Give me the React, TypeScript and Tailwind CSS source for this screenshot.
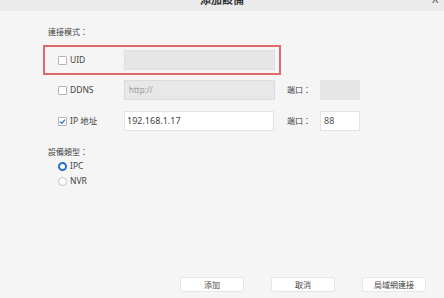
import React from "react";

const font = { fontFamily: '"Noto Sans", "Noto Sans CJK TC", sans-serif' };

function Check({ checked }: { checked?: boolean }) {
  return (
    <div className="w-[9px] h-[9px] border border-[#b5b5b5] bg-white rounded-[1px] flex items-center justify-center shrink-0">
      {checked && (
        <svg width="7" height="7" viewBox="0 0 7 7">
          <path d="M1 3.6 L2.8 5.3 L6 1.6" stroke="#2f74c9" strokeWidth="1.3" fill="none" />
        </svg>
      )}
    </div>
  );
}

function Radio({ checked }: { checked?: boolean }) {
  return checked ? (
    <div className="w-[9px] h-[9px] rounded-full border-[2.5px] border-[#1f6fcf] bg-white shrink-0" />
  ) : (
    <div className="w-[9px] h-[9px] rounded-full border border-[#c4c4c4] bg-white shrink-0" />
  );
}

function Label({ checked, text }: { checked?: boolean; text: string }) {
  return (
    <div className="w-[66px] flex items-center gap-[3px] shrink-0">
      <Check checked={checked} />
      <span className="text-[8.5px] leading-none text-[#444]">{text}</span>
    </div>
  );
}

function Btn({ text }: { text: string }) {
  return (
    <div className="w-[64px] h-[15px] bg-white border border-[#e6e6e6] rounded-[2px] flex items-center justify-center text-[8px] leading-none text-[#444]">
      {text}
    </div>
  );
}

export default function App() {
  return (
    <div className="w-[444px] h-[298px] bg-[#f5f5f5] overflow-hidden flex flex-col" style={font}>
      <div className="h-[26px] -mt-[15px] bg-[#ebebeb] shrink-0 relative flex justify-center">
        <span className="pt-[9px] text-[11px] leading-[11px] font-bold text-[#333]">添加設備</span>
        <span className="absolute right-[6px] top-[9px] text-[10px] leading-[11px] text-[#444]">X</span>
      </div>

      <div className="pl-[48px] mt-[16px] text-[8px] leading-[10px] text-[#444]">連接模式：</div>

      <div className="ml-[43px] mt-[8px] w-[238px] h-[30px] border-2 border-[#e06a6a] flex items-center pl-[13px]">
        <Label text="UID" />
        <div className="w-[151px] h-[20px] bg-[#e6e6e6] border border-[#e0e0e0] -mt-[1px]" />
      </div>

      <div className="mt-[5px] h-[20px] flex items-center pl-[58px]">
        <Label text="DDNS" />
        <div className="w-[151px] h-[20px] bg-[#e8e8e8] border border-[#dcdcdc] flex items-center pl-[4px] text-[8px] text-[#9a9a9a]">
          http://
        </div>
        <span className="ml-[12px] w-[33px] text-[8px] text-[#444]">端口：</span>
        <div className="w-[40px] h-[20px] bg-[#e6e6e6]" />
      </div>

      <div className="mt-[11px] h-[20px] flex items-center pl-[58px]">
        <Label checked text="IP 地址" />
        <div className="w-[150px] h-[20px] bg-white border border-[#e3e3e3] flex items-center pl-[2px] text-[9px] text-[#444]">
          192.168.1.17
        </div>
        <span className="ml-[13px] w-[33px] text-[8px] text-[#444]">端口：</span>
        <div className="w-[40px] h-[20px] bg-white border border-[#e3e3e3] flex items-center pl-[3px] text-[9px] text-[#555]">
          88
        </div>
      </div>

      <div className="pl-[48px] mt-[16px] text-[8px] leading-[10px] text-[#444]">設備類型：</div>
      <div className="pl-[58px] mt-[4px] flex items-center gap-[3px] h-[10px]">
        <Radio checked />
        <span className="text-[8.5px] leading-none text-[#444]">IPC</span>
      </div>
      <div className="pl-[58px] mt-[5px] flex items-center gap-[3px] h-[10px]">
        <Radio />
        <span className="text-[8.5px] leading-none text-[#444]">NVR</span>
      </div>

      <div className="mt-auto mb-[6px] flex pl-[180px] gap-[27px]">
        <Btn text="添加" />
        <Btn text="取消" />
        <Btn text="局域網連接" />
      </div>
    </div>
  );
}
